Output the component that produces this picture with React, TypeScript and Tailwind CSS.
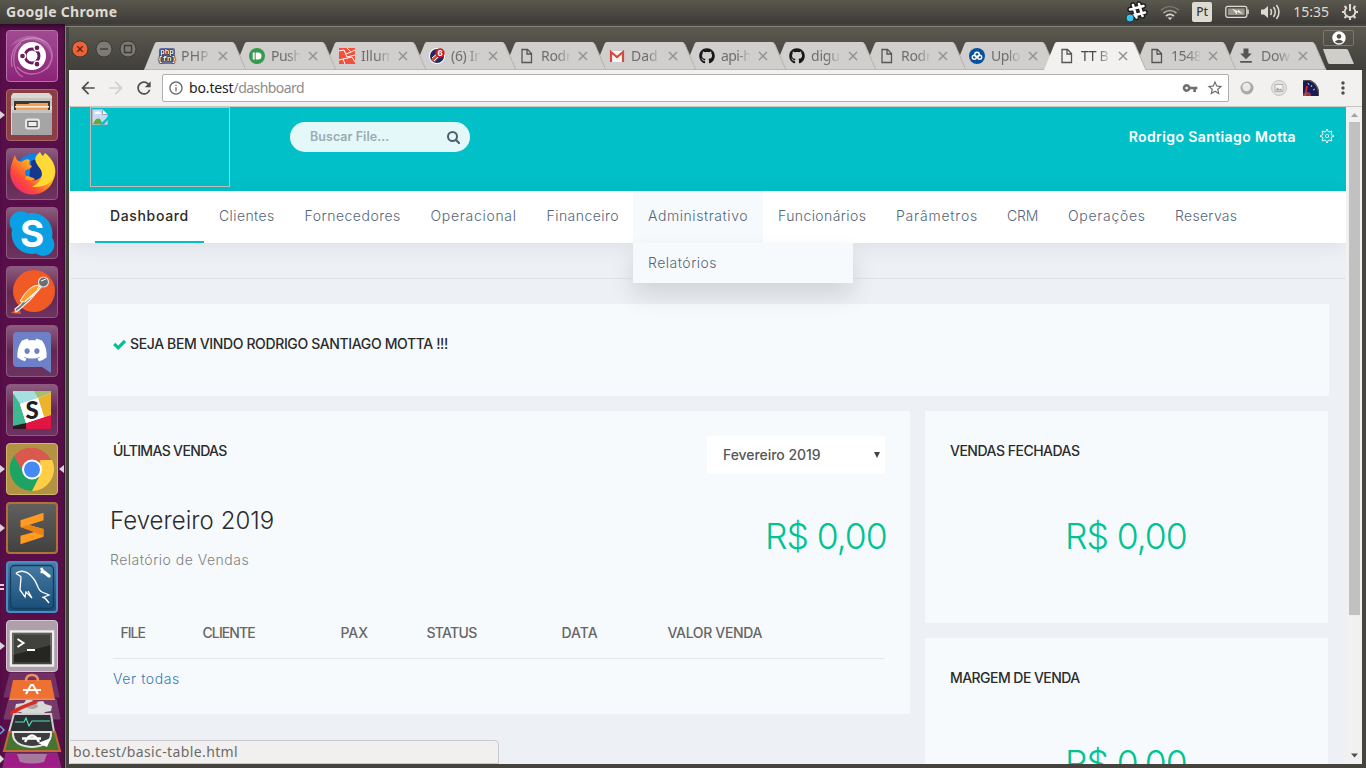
import React from "react";
import {
  MdArrowBack,
  MdArrowForward,
  MdRefresh,
  MdInfoOutline,
  MdVpnKey,
  MdStarBorder,
  MdMoreVert,
  MdFileDownload,
  MdAccountCircle,
} from "react-icons/md";
import { FaGithub, FaSkype, FaDiscord } from "react-icons/fa";
import { TfiSettings } from "react-icons/tfi";

/* ---------- system bar ---------- */

function SystemBar() {
  return (
    <header className="flex h-6 shrink-0 items-center justify-between bg-linear-to-b from-[#5a584e] to-[#3c3b37] pr-[7px] pl-[6px] font-['Noto_Sans',sans-serif] text-[#dfdbd2]">
      <span className="-mt-px text-[14px] font-bold tracking-[0.3px]">Google Chrome</span>
      <div className="flex items-center">
        <svg className="mr-[12px] h-6 w-6" viewBox="0 0 24 24">
          <g stroke="#1f1f1f" strokeWidth="5.500" strokeLinecap="round">
            <path d="M9 5l3.500 12.500M15 4l3.500 12M6 9.500l13.500-3.500M7.500 16l13.500-3.500" />
          </g>
          <g stroke="#fff" strokeWidth="2.600" strokeLinecap="round">
            <path d="M9 5l3.500 12.500M15 4l3.500 12M6 9.500l13.500-3.500M7.500 16l13.500-3.500" />
          </g>
          <circle cx="6" cy="18" r="4" fill="#39c3f2" stroke="#222" strokeWidth=".8" />
        </svg>
        <svg className="mr-[12px] h-[18px] w-5" viewBox="0 0 20 18" fill="none" strokeWidth="1.700">
          <path d="M1 7q9-7 18 0" stroke="#77756c" />
          <path d="M3.500 10q6.500-5 13 0" stroke="#aaa79e" />
          <path d="M6 13q4-3.200 8 0" stroke="#dfdbd2" />
          <path d="M7.500 14.500h5L10 17z" fill="#dfdbd2" />
        </svg>
        <span className="mr-[13px] flex h-5 w-5 items-center justify-center rounded-[2px] bg-[#dfdbd2] text-[12px] font-medium text-[#3c3b37]">
          Pt
        </span>
        <svg className="mr-[11px] h-[14px] w-6" viewBox="0 0 24 14">
          <rect x=".8" y="1.300" width="21" height="11" rx="2" fill="none" stroke="#dfdbd2" strokeWidth="1.300" />
          <rect x="3" y="3.500" width="16.600" height="6.600" fill="#99968d" />
          <path d="M7 3.500l6 3v-2l5 4.500-6-2v2.500z" fill="#f4f1e8" />
          <path d="M23 4.500v4.500" stroke="#dfdbd2" strokeWidth="1.500" />
        </svg>
        <svg className="mr-[13px] h-[18px] w-5" viewBox="0 0 20 18" fill="none" stroke="#dfdbd2" strokeWidth="1.500">
          <path d="M1 6.500h3l4-3.500v12L4 11.500H1z" fill="#dfdbd2" stroke="none" />
          <path d="M10.500 6q2 3 0 6M13.500 4q3.500 5 0 10M16.500 2q5 7 0 14" />
        </svg>
        <span className="-mt-px mr-[12px] text-[14px]">15:35</span>
        <svg className="h-[18px] w-[18px]" viewBox="0 0 18 18" fill="none" stroke="#dfdbd2">
          <path d="M6 4.500a5.300 5.300 0 1 0 6 0" strokeWidth="1.800" />
          <path d="M9 1v7" strokeWidth="2" />
          <path d="M3.500 3l2 2M14.500 3l-2 2M1 9h3M17 9h-3M3.500 15l2-2M14.500 15l-2-2M9 17v-3" strokeWidth="2" />
        </svg>
      </div>
    </header>
  );
}

/* ---------- launcher ---------- */

const tile = "flex h-[52px] w-[52px] items-center justify-center overflow-hidden rounded-[4px] border";
const plum = "border-[#8d5a80] bg-linear-to-b from-[#8c5c7f] via-[#64274f] to-[#6d3360]";

function UbuntuIcon() {
  return (
    <svg className="h-[50px] w-[50px]" viewBox="0 0 50 50">
      <g fill="none" stroke="#d39ccb" strokeWidth="1.300" opacity=".6">
        <path d="M5 36C0 10 26 0 40 12q10 12 0 26" />
        <path d="M44 20c6 18-20 32-34 16M16 46C4 40 4 20 14 12" />
      </g>
      <path d="M3 16C16-2 42 2 44 25 40 8 18 4 3 16z" fill="#fff" opacity=".18" />
      <circle cx="25" cy="25" r="14" fill="#fff" />
      <circle cx="25" cy="25" r="7" fill="none" stroke="#6b1d5e" strokeWidth="3" />
      <g fill="#6b1d5e" stroke="#fff" strokeWidth="1.300">
        <circle cx="15.500" cy="25" r="3" />
        <circle cx="30" cy="16.800" r="3" />
        <circle cx="30" cy="33.200" r="3" />
      </g>
    </svg>
  );
}

function FilesIcon() {
  return (
    <svg className="h-[50px] w-[50px]" viewBox="0 0 50 50">
      <path d="M6 3h36l3 3v39H4V6z" fill="#d8d8d6" />
      <path d="M4 8h41v8H4z" fill="#c4c4c2" />
      <path d="M7 11h36v9H7z" fill="#41362f" />
      <path d="M9 14h12l2-1h18v8H9z" fill="#f0a05a" />
      <path d="M8 16h34v1.500H8z" fill="#fff3df" />
      <path d="M5 20h40v25H5z" fill="#a5a5a5" />
      <path d="M5 20h40v3H5z" fill="#c4c4c4" />
      <rect x="19" y="29.500" width="13" height="9" rx="2" fill="none" stroke="#e7e7e7" strokeWidth="2" />
      <rect x="21" y="31.500" width="9" height="5" fill="#eee" stroke="#555" />
    </svg>
  );
}

function FirefoxIcon() {
  return (
    <svg className="h-[50px] w-[50px]" viewBox="0 0 50 50">
      <defs>
        <linearGradient id="ff" x1="1" y1="0" x2="0" y2="1">
          <stop offset="0" stopColor="#fff44f" />
          <stop offset=".4" stopColor="#ffb01e" />
          <stop offset=".68" stopColor="#ff4a3a" />
          <stop offset="1" stopColor="#e5178c" />
        </linearGradient>
      </defs>
      <circle cx="26" cy="22" r="17" fill="#0a84e8" />
      <path d="M24 12c8-4 15 2 14 14-1 8-10 10-16 5z" fill="#17378f" />
      <path d="M8 6c1 5 3 6 6 7 4-3 8-4 9-1-2 2 0 4 2 5-1 3-4 3-7 5-1 6 7 13 15 7 6-6 3-11 2-15-1-4 1-7 3-10 10 8 13 18 8 28-5 13-23 18-34 9C-1 30 3 17 8 6z" fill="url(#ff)" />
      <path d="M33 3c-9 7-3 12 1 18 3 7-2 13-9 17 17 1 26-9 21-20C44 9 36 10 33 3z" fill="#ffd935" />
      <path d="M18 31c4-1 6 2 10-1-2-1-5-3-9-3z" fill="#ffa21a" />
    </svg>
  );
}

function SkypeIcon() {
  return (
    <div className="relative flex h-[50px] w-[50px] items-center justify-center">
      <FaSkype className="h-[51px] w-[51px] text-[#0ba0e4]" />
      <svg className="absolute h-[50px] w-[50px]" viewBox="0 0 50 50">
        <circle cx="25" cy="25" r="16" fill="#0c9fe2" />
      </svg>
      <span className="absolute font-['Inter',sans-serif] text-[37px] leading-none font-bold text-white">S</span>
    </div>
  );
}

function PostmanIcon() {
  return (
    <svg className="h-[50px] w-[50px]" viewBox="0 0 50 50">
      <circle cx="27" cy="24" r="21" fill="#f15a24" />
      <path d="M4 46l8-6 2 7z" fill="#f15a24" />
      <path d="M35 19L23 33 13 42l-4 3-1-3 5-4 14-18z" fill="#777" stroke="#eee" strokeWidth="1.200" />
      <path d="M32 18q-10 0-19 16l5 1 14-12z" fill="#ff9a2b" stroke="#fff" />
      <path d="M18 34l14-12" stroke="#fff" />
      <circle cx="36.500" cy="15" r="5" fill="#6d6e71" stroke="#ddd" strokeWidth="1.200" />
      <path d="M34 14l5-2M33 19l-3 3" stroke="#fff" />
    </svg>
  );
}

function DiscordIcon() {
  return (
    <div className="relative flex h-[50px] w-[50px] items-center justify-center">
      <svg className="absolute h-[50px] w-[50px]" viewBox="0 0 50 50">
        <path d="M10 6h30q4 0 4 4v37l-9-6H10q-4 0-4-4V10q0-4 4-4z" fill="#6d80c8" />
      </svg>
      <FaDiscord className="relative h-[30px] w-[32px] -translate-y-px text-white" />
    </div>
  );
}

function SlackIcon() {
  return (
    <div className="relative flex h-[50px] w-[50px] items-center justify-center">
      <svg className="absolute h-[50px] w-[50px]" viewBox="0 0 50 50">
        <path d="M6 6h38v38H6z" fill="#fff" />
        <path d="M6 6h22l3 7-21 7z" fill="#a6dfe0" />
        <path d="M27 6h17v2l-13 5z" fill="#a5bf70" />
        <path d="M31 13l13-5v22l-7 2z" fill="#ecb32d" />
        <path d="M6 8l7 11 6 19-13 5z" fill="#3eb890" />
        <path d="M19 38l25-8v14H19z" fill="#e01543" />
        <path d="M6 41l13-3v6H6z" fill="#2d1823" />
        <path d="M13 19l18-6 6 19-18 6z" fill="#fff" />
      </svg>
      <span className="relative font-['Lato',sans-serif] text-[24px] leading-none font-black text-[#202020]">S</span>
    </div>
  );
}

function ChromeIcon() {
  return (
    <svg className="h-[50px] w-[50px]" viewBox="0 0 50 50">
      <path d="M7 12A22 22 0 0 1 44 16L45 18H25L16 28z" fill="#d9594f" />
      <path d="M45 16A22 22 0 0 1 24 47L34 28 33 16z" fill="#ffcd46" />
      <path d="M7 12A22 22 0 0 0 25 47L32 33 17 29z" fill="#1da362" />
      <circle cx="25" cy="25.500" r="10" fill="#fff" />
      <circle cx="25" cy="25.500" r="8" fill="#4688f4" />
    </svg>
  );
}

function SublimeIcon() {
  return (
    <svg className="h-[48px] w-[48px]" viewBox="0 0 50 50">
      <path d="M13 17l24-8v8l-15 5 15 4v8l-24 8v-9l15-4-15-5z" fill="#ff9a22" />
      <path d="M13 24l24 9v-7l-15-4z" fill="#e88414" />
    </svg>
  );
}

function WorkbenchIcon() {
  return (
    <svg className="h-[48px] w-[48px]" viewBox="0 0 48 48" fill="none" stroke="#fff" strokeWidth="1.300">
      <rect x="2.500" y="2.500" width="43" height="43" rx="4" stroke="#123d5d" />
      <path d="M8 10c7-4 13 0 17 5 5 5 4 12 9 14l7 3-5 2 5 6M8 10c1 2 4 2 5 4l-1 13 5 7 1-5 6 6-4-7M34 34l4 2 3 4" />
      <path d="M36 9l5 4" strokeWidth="3.500" strokeLinecap="round" />
      <path d="M33 5l2 3M32.500 9h4" strokeWidth="2.500" />
    </svg>
  );
}

function TerminalIcon() {
  return (
    <svg className="h-[50px] w-[50px]" viewBox="0 0 50 50">
      <rect x="4" y="10.500" width="42" height="34" fill="#34352f" stroke="#eee" strokeWidth="2.500" />
      <rect x="6.500" y="13" width="37" height="29" fill="#252622" stroke="#555" />
      <path d="M6 12h38v12L6 34z" fill="#fff" opacity=".13" />
      <path d="M10.500 18l6 4-6 4M20 29h8" fill="none" stroke="#fff" strokeWidth="2" />
    </svg>
  );
}

function FoldedStack() {
  return (
    <svg className="h-[96px] w-16" viewBox="0 0 64 96">
      <path d="M10 1h44l5 24H4z" fill="#fff" opacity=".15" stroke="#fff" />
      <path d="M13 8h38l4 20H9z" fill="#ef7132" />
      <path d="M26 9q0-6 6-6t6 6" fill="none" stroke="#e8905f" strokeWidth="2.500" />
      <path d="M23 18h18M26 22l5-9h2l5 9" stroke="#fff" strokeWidth="2" fill="none" />
      <path d="M9 27h47l4 20H4z" fill="#fff" opacity=".18" stroke="#fff" />
      <path d="M16 32l8-1 2-3h6l3 2 8-1 2 3 7 2-1 5-6 1-3 4H24l-3-4-7 1z" fill="#d8d8d6" />
      <ellipse cx="32" cy="34" rx="6" ry="3" fill="#a9a3a7" />
      <path d="M10 40c8-6 14-7 25-12l3 3c-9 3-17 6-25 12q-4 0-3-3z" fill="#d92c25" />
      <path d="M14 42h37l3 18H9z" fill="#2b3132" stroke="#ccc" strokeWidth="2" />
      <path d="M15 50h9l2-4 3 8 3-5h18" fill="none" stroke="#57dcc0" strokeWidth="1.200" />
      <path d="M9 60h46l5 19H4z" fill="#467532" stroke="#c36a36" strokeWidth="2" />
      <path d="M13 60h38q1 14-19 15-20-1-19-15z" fill="#3d3e3d" stroke="#e4e4e4" strokeWidth="2" />
      <path d="M25 70q7-13 14 0M22 66.500h19" fill="none" stroke="#fff" strokeWidth="2.500" />
      <path d="M38 71l13-5-4 9z" fill="#fff" />
      <path d="M6 81h51l4 15H3z" fill="#9d1c85" stroke="#7e3b70" />
      <path d="M17 82h30l-3 8q-12 3-24 0z" fill="#a8799f" />
      <path d="M0 54l4 4-4 4" fill="none" stroke="#68a7df" strokeWidth="1.500" />
      <path d="M0 83l4 4-4 4z" fill="#ddd" />
    </svg>
  );
}

const apps = [
  { name: "dash", skin: "border-[#b772ad] bg-linear-to-b from-[#a04a92] to-[#8d2377]", icon: <UbuntuIcon />, run: 0, focus: false },
  { name: "files", skin: "border-[#a96a6a] bg-[#8b3f45]", icon: <FilesIcon />, run: 1, focus: false },
  { name: "firefox", skin: plum, icon: <FirefoxIcon />, run: 0, focus: false },
  { name: "skype", skin: plum, icon: <SkypeIcon />, run: 0, focus: false },
  { name: "postman", skin: plum, icon: <PostmanIcon />, run: 0, focus: false },
  { name: "discord", skin: plum, icon: <DiscordIcon />, run: 0, focus: false },
  { name: "slack", skin: plum, icon: <SlackIcon />, run: 0, focus: false },
  { name: "chrome", skin: "border-[#d0b76b] bg-[#b29343]", icon: <ChromeIcon />, run: 1, focus: true },
  { name: "sublime", skin: "border-2 border-[#b3713a] bg-linear-to-b from-[#62605e] to-[#41413f]", icon: <SublimeIcon />, run: 1, focus: false },
  { name: "workbench", skin: "border-2 border-[#4c8cc4] bg-linear-to-b from-[#467ca6] to-[#174d76]", icon: <WorkbenchIcon />, run: 2, focus: false },
  { name: "terminal", skin: "border-[#d5c6d1] bg-[#ada0aa]", icon: <TerminalIcon />, run: 1, focus: false },
];

function Launcher() {
  return (
    <aside className="flex w-[65px] shrink-0 flex-col overflow-hidden border-r border-[#35102c] bg-[#570e49] pt-[6px] shadow-[inset_0_5px_5px_-3px_#2a0822]">
      {apps.map((a) => (
        <div key={a.name} className="mb-[7px] flex h-[52px] shrink-0 items-center last-of-type:mb-0">
          <svg className="h-[10px] w-[6px] shrink-0" viewBox="0 0 6 10" fill="#dcd3da">
            {a.run === 1 && <path d="M0 1l5 4-5 4z" />}
            {a.run === 2 && <path d="M0 2h4v2H0zM0 6h4v2H0z" />}
          </svg>
          <div className={`${tile} ${a.skin}`}>{a.icon}</div>
          {a.focus && (
            <svg className="h-[10px] w-[6px] shrink-0" viewBox="0 0 6 10" fill="#dcd3da">
              <path d="M6 1L1 5l5 4z" />
            </svg>
          )}
        </div>
      ))}
      <FoldedStack />
    </aside>
  );
}

/* ---------- browser chrome ---------- */

const pageIcon = (
  <svg className="h-4 w-4" viewBox="0 0 16 16" fill="none" stroke="#555" strokeWidth="1.300">
    <path d="M3 1.500h5.500l4 4v9H3zM8 1.500v4.500h4.500" />
  </svg>
);

const icons: Record<string, React.ReactNode> = {
  page: pageIcon,
  php: (
    <span className="flex h-4 w-4 flex-col items-center justify-center rounded-[2px] bg-[#6d70a5] font-['Liberation_Mono',monospace] text-[7.500px] leading-[7px] font-bold text-white [text-shadow:0_0_1px_#000,0_0_1px_#000,0_0_2px_#000]">
      <span>php</span>
      <span>{"{fn}"}</span>
    </span>
  ),
  push: (
    <svg className="h-4 w-4" viewBox="0 0 16 16">
      <circle cx="8" cy="8" r="8" fill="#359a4b" />
      <path d="M3.700 4.500h2v7h-2zM6.700 4.500H9a3.500 3.500 0 0 1 0 7H6.700z" fill="#fff" />
    </svg>
  ),
  laravel: (
    <svg className="h-4 w-4" viewBox="0 0 16 16">
      <path d="M0 0h16v16H0z" fill="#f4503b" />
      <path d="M0 3l5-1 3 7 8-2M4 11l9-2 3 5M8 0l4 4 4-2M12 4l-5 2M0 12l4-1 2 5" fill="none" stroke="#fff" />
    </svg>
  ),
  inbox: (
    <svg className="h-4 w-4" viewBox="0 0 16 16">
      <circle cx="8" cy="8" r="8" fill="#fff" />
      <circle cx="8" cy="8" r="7" fill="#20285f" />
      <path d="M2 12l8-9 4 2-8 9z" fill="#e34b35" />
      <path d="M3 10l7-6M5 13l7-7" stroke="#fff" />
      <circle cx="11" cy="5" r="4.700" fill="#c51f24" />
      <text x="11" y="8" textAnchor="middle" fontFamily="Inter" fontWeight="700" fontSize="8" fill="#fff">6</text>
    </svg>
  ),
  gmail: (
    <svg className="h-4 w-4" viewBox="0 0 16 16">
      <path d="M1 3h14v11H1z" fill="#f5f5f5" />
      <path d="M2 14V4l6 5 6-5v10" fill="none" stroke="#d54b3d" strokeWidth="2.200" />
    </svg>
  ),
  github: <FaGithub className="h-4 w-4 text-[#191717]" />,
  cloud: (
    <svg className="h-4 w-4" viewBox="0 0 16 16">
      <circle cx="8" cy="8" r="8" fill="#07529c" />
      <g fill="none" stroke="#fff" strokeWidth="1.400">
        <circle cx="8" cy="6.500" r="2.300" />
        <circle cx="5.300" cy="9.300" r="2" />
        <circle cx="10.700" cy="9.300" r="2" />
      </g>
    </svg>
  ),
  download: <MdFileDownload className="h-5 w-5 -translate-x-[3px] -translate-y-[2px] text-[#555]" />,
};

const tabs = [
  { icon: "php", label: "PHP", spacing: "tracking-[0.2px]" },
  { icon: "push", label: "Push", spacing: "tracking-[-0.5px]" },
  { icon: "laravel", label: "Illum", spacing: "tracking-[0px]" },
  { icon: "inbox", label: "(6) In", spacing: "tracking-[-0.3px]" },
  { icon: "page", label: "Rodr", spacing: "tracking-[-0.3px]" },
  { icon: "gmail", label: "Dad", spacing: "tracking-[0px]" },
  { icon: "github", label: "api-h", spacing: "tracking-[-0.6px]" },
  { icon: "github", label: "digu", spacing: "tracking-[-0.2px]" },
  { icon: "page", label: "Rodr", spacing: "tracking-[-0.3px]" },
  { icon: "cloud", label: "Uplo", spacing: "tracking-[-0.5px]" },
  { icon: "page", label: "TT B", spacing: "tracking-[-0.3px]", active: true },
  { icon: "page", label: "1548", spacing: "tracking-[-0.4px]" },
  { icon: "download", label: "Dow", spacing: "tracking-[-0.2px]" },
];

const tabLayers = ["z-13", "z-12", "z-11", "z-10", "z-9", "z-8", "z-7", "z-6", "z-5", "z-4", "z-20", "z-2", "z-1"];

function TabStrip() {
  return (
    <div className="flex h-[43px] shrink-0 items-start bg-linear-to-b from-[#5b594f] to-[#403f3a] pl-[2px]">
      <svg className="mt-[13px] mr-[7px] h-[18px] w-[66px]" viewBox="0 0 66 18">
        <circle cx="9" cy="9" r="8" fill="#ef6236" stroke="#3b3933" />
        <path d="M6.300 6.300l5.400 5.400M11.700 6.300l-5.400 5.400" stroke="#5b2613" strokeWidth="1.400" />
        <circle cx="33" cy="9" r="8" fill="#7d7a73" stroke="#3b3933" />
        <path d="M29 9h8" stroke="#3b3933" strokeWidth="1.300" />
        <circle cx="57" cy="9" r="8" fill="#7d7a73" stroke="#3b3933" />
        <path d="M53.500 5.500h7v7h-7z" fill="none" stroke="#3b3933" strokeWidth="1.300" />
      </svg>
      <div className="mt-[15px] flex h-7">
        {tabs.map((t, i) => (
          <div key={i} className={`relative flex h-7 w-[90px] shrink-0 items-center pl-[15px] ${tabLayers[i]}`}>
            <svg className="absolute top-0 left-0 h-7 w-[103px]" viewBox="0 0 103 28">
              <path d="M0 28L10.500 2q.8-2 2.500-2h75q2 0 2.700 2L102 28z" fill={t.active ? "#f2f1f0" : "#d0cfcd"} />
              <path d="M90.700 2L102 28" stroke="#b3b1ad" fill="none" />
              {!t.active && <path d="M0 27.500h102" stroke="#b9b7b4" />}
            </svg>
            <span className="relative h-4 w-4">{icons[t.icon]}</span>
            <span
              className={`relative ml-[6px] w-[29px] font-['Noto_Sans',sans-serif] text-[14px] leading-5 whitespace-nowrap [mask-image:linear-gradient(90deg,#000_55%,transparent_105%)] ${t.spacing} ${t.active ? "text-[#4a4a4a]" : "text-[#6f6e6c]"}`}
            >
              {t.label}
            </span>
            <svg className="relative ml-[8px] h-[10px] w-[10px] shrink-0" viewBox="0 0 10 10" stroke="#94928f" strokeWidth="1.500">
              <path d="M1 1l8 8M9 1L1 9" />
            </svg>
          </div>
        ))}
      </div>
      <div className="flex flex-col">
        <div className="mt-[3px] ml-[9px] flex h-4 w-[31px] items-center justify-center rounded-[2px] border border-[#7a776f]">
          <MdAccountCircle className="h-4 w-4 text-white" />
        </div>
        <svg className="mt-[3px] ml-[8px] h-[15px] w-8" viewBox="0 0 32 15">
          <path d="M1 0h23q1.500 0 2 1l6 14H8q-1.500 0-2-1z" fill="#cfcecb" />
        </svg>
      </div>
    </div>
  );
}

function Toolbar() {
  return (
    <div className="flex h-[37px] shrink-0 items-center border-b border-[#c9c7c4] bg-[#f2f1f0] pl-[9px]">
      <MdArrowBack className="mr-[8px] h-5 w-5 text-[#4d4d4d]" />
      <MdArrowForward className="mr-[8px] h-5 w-5 text-[#cfcfcf]" />
      <MdRefresh className="mr-[8px] h-5 w-5 text-[#4d4d4d]" />
      <div className="flex h-7 w-[1067px] items-center rounded-[2px] border border-[#b1afab] bg-white pr-[4px] pl-[5px] font-['Noto_Sans',sans-serif] text-[14px]">
        <MdInfoOutline className="mr-[5px] h-4 w-4 text-[#6a6a6a]" />
        <span className="-mt-0.5 tracking-[-0.15px] text-[#222]">bo.test</span>
        <span className="-mt-0.5 tracking-[-0.55px] text-[#8c8c8c]">/dashboard</span>
        <MdVpnKey className="mr-[8px] ml-auto h-4 w-4 text-[#6f6f6f]" />
        <MdStarBorder className="h-[18px] w-[18px] text-[#6f6f6f]" />
      </div>
      <svg className="ml-[11px] h-[14px] w-[14px]" viewBox="0 0 14 14">
        <circle cx="7" cy="7" r="6.500" fill="#a9a9a9" />
        <circle cx="6.500" cy="6" r="4.200" fill="#e9e9e9" />
      </svg>
      <svg className="ml-[17px] h-4 w-4" viewBox="0 0 16 16">
        <circle cx="8" cy="8" r="7.500" fill="#e2e2e2" stroke="#c2c2c2" />
        <path d="M4 4.500h8v7H4z" fill="#f3f3f3" stroke="#b0b0b0" />
        <path d="M4.500 10.500l2-3 2 2 1.500-1 1.500 2z" fill="#a0a0a0" />
      </svg>
      <svg className="ml-[16px] h-4 w-4" viewBox="0 0 16 16">
        <path d="M0 1q6-3 12 3 4 5 4 12H0z" fill="#191b54" />
        <path d="M0 1q6-3 12 3 4 5 4 12" fill="none" stroke="#555" strokeWidth="1.500" />
        <path d="M5 3l1 2M9 5L8 7M12 9l-2 1" stroke="#b9c6f5" />
        <path d="M2 16L4 6" stroke="#f12c2c" strokeWidth="1.500" />
        <path d="M0 14q6-4 8 0v2H0z" fill="#d34f59" opacity=".6" />
      </svg>
      <MdMoreVert className="ml-[14px] h-5 w-5 text-[#4d4d4d]" />
    </div>
  );
}

/* ---------- page ---------- */

const menu = [
  { label: "Dashboard", box: "w-[109px] border-b-2 border-[#01c0c8] font-medium text-[#2b2b2b] tracking-[0.65px]" },
  { label: "Clientes", box: "w-[85.500px] tracking-[0.4px]" },
  { label: "Fornecedores", box: "w-[126px] tracking-[0.5px]" },
  { label: "Operacional", box: "w-[116px] tracking-[0.7px]" },
  { label: "Financeiro", box: "w-[101.500px] tracking-[0.45px]" },
  { label: "Administrativo", box: "relative w-[130px] bg-[#f7fafc] tracking-[0.57px]" },
  { label: "Funcionários", box: "w-[118px] tracking-[0.4px]" },
  { label: "Parâmetros", box: "w-[111px] tracking-[0.8px]" },
  { label: "CRM", box: "w-[61px] tracking-[-0.2px]" },
  { label: "Operações", box: "w-[107px] tracking-[0.7px]" },
  { label: "Reservas", box: "w-[92px] tracking-[0.3px]" },
];

function BrandBar() {
  return (
    <div className="flex h-[84px] shrink-0 items-start bg-[#01c0c8] pl-[20px]">
      <div className="h-20 w-[140px] border border-[#c0c0c0] p-px">
        <svg className="h-4 w-4" viewBox="0 0 16 16">
          <path d="M.5.500h10l5 5v10H.5z" fill="#c7dbf8" stroke="#b5b5b5" />
          <path d="M10.500.500v5h5" fill="#fff" stroke="#a5a5a5" />
          <path d="M2.500 5q0-2 2-2 1-1.500 2.500 0 2 0 2 2z" fill="#fff" />
          <path d="M1 15q3-7 7-5l3 5z" fill="#5cad3b" />
          <path d="M8 15.500l8-8v3l-4 5z" fill="#01c0c8" />
        </svg>
      </div>
      <div className="mt-[15px] ml-[60px] flex h-[30px] w-[180px] items-center justify-between rounded-full bg-[#e5f8f9] pr-[10px] pl-5">
        <span className="text-[12.500px] font-semibold tracking-[0.04px] text-[#9aabb1]">Buscar File...</span>
        <svg className="h-[13px] w-[13px]" viewBox="0 0 13 13" fill="none" stroke="#4d6070">
          <circle cx="5.500" cy="5.500" r="4.500" strokeWidth="2" />
          <path d="M8.800 8.800l3.200 3.200" strokeWidth="2.200" strokeLinecap="round" />
        </svg>
      </div>
      <span className="mt-[19px] ml-auto text-[14px] leading-[22px] font-semibold tracking-[0.4px] text-white">Rodrigo Santiago Motta</span>
      <TfiSettings className="mt-[22px] mr-[12px] ml-[24px] h-[14px] w-[14px] text-white" />
    </div>
  );
}

function Menu() {
  return (
    <nav className="relative z-10 flex h-[52px] shrink-0 bg-white pl-[25px] text-[14px] font-light text-[#54667a] shadow-[0_4px_20px_rgba(0,0,0,0.07)]">
      {menu.map((m) => (
        <div key={m.label} className={`flex h-[52px] shrink-0 items-start pt-[15px] pl-[15px] leading-5 whitespace-nowrap ${m.box}`}>
          {m.label}
          {m.label === "Administrativo" && (
            <div className="absolute top-[52px] left-0 h-10 w-[220px] bg-[#f7fafc] px-[15px] pt-[10px] tracking-[0.5px] shadow-[0_12px_24px_rgba(0,0,0,0.12)]">
              Relatórios
            </div>
          )}
        </div>
      ))}
    </nav>
  );
}

const title = "text-[14px] leading-5 font-medium text-[#2b2b2b]";
const amount = "text-[35.500px] leading-[40px] font-light tracking-[-1.05px] whitespace-nowrap text-[#00c292]";

function SalesCard() {
  return (
    <section className="h-[303px] w-[822px] bg-[#f7fafc] px-[25px] pt-[25px]">
      <div className="flex h-[38px] justify-between">
        <h3 className={`${title} mt-[5px] tracking-[-0.65px]`}>ÚLTIMAS VENDAS</h3>
        <div className="flex h-[38px] w-[178px] items-center justify-between bg-white pr-[5px] pl-4 text-[14px] font-medium text-[#565656]">
          <span className="-mt-0.5 tracking-[-0.05px]">Fevereiro 2019</span>
          <svg className="h-[6px] w-[6px]" viewBox="0 0 6 6">
            <path d="M0 0h6L3 6z" fill="#444" />
          </svg>
        </div>
      </div>
      <div className="mr-[-2px] ml-[-3px] flex justify-between">
        <div>
          <p className="mt-[29px] text-[24px] leading-9 font-light tracking-[0.03px] text-[#2b2b2b]">Fevereiro 2019</p>
          <p className="mt-[11px] text-[14px] leading-5 font-light tracking-[0.5px] text-[#808080]">Relatório de Vendas</p>
        </div>
        <p className={`${amount} mt-[43px] w-[122px]`}>R$ 0,00</p>
      </div>
      <table className="mt-[38px] w-[772px] table-fixed border-b border-[#e4e7ea] text-left text-[14px] text-[#666]">
        <thead>
          <tr className="h-[50px] leading-5">
            <th className="w-[82px] pl-[7.500px] font-medium tracking-[-1px]">FILE</th>
            <th className="w-[138px] pl-[7.500px] font-medium tracking-[-0.9px]">CLIENTE</th>
            <th className="w-[86px] pl-[7.500px] font-medium tracking-[-0.1px]">PAX</th>
            <th className="w-[135px] pl-[7.500px] font-medium tracking-[-0.7px]">STATUS</th>
            <th className="w-[106px] pl-[7.500px] font-medium">DATA</th>
            <th className="pl-[7.500px] font-medium tracking-[-0.35px]">VALOR VENDA</th>
          </tr>
        </thead>
      </table>
      <a className="mt-[10px] block text-[14px] leading-5 font-light tracking-[0.6px] text-[#337ab7]">Ver todas</a>
    </section>
  );
}

function TotalCard({ label, tracking }: { label: string; tracking: string }) {
  return (
    <section className="h-[212px] w-[403px] shrink-0 bg-[#f7fafc] pt-[30px] pl-[25px]">
      <h3 className={`${title} ${tracking}`}>{label}</h3>
      <p className={`${amount} mt-[56px] ml-[115px]`}>R$ 0,00</p>
    </section>
  );
}

function Page() {
  return (
    <div className="relative flex min-w-0 flex-1 flex-col overflow-hidden bg-[#edf1f5] font-['Inter',sans-serif]">
      <BrandBar />
      <Menu />
      <div className="h-9 shrink-0 border-b border-[#e1e5e8]" />
      <main className="flex min-h-0 flex-1 flex-col gap-[15px] pt-[25px] pl-[18px]">
        <section className="flex h-[92px] w-[1241px] shrink-0 items-start bg-[#f7fafc] pt-[30px] pl-[25px]">
          <svg className="mt-[5px] mr-[4px] h-[11px] w-[13px]" viewBox="0 0 13 11" fill="none" stroke="#00c292" strokeWidth="3.200">
            <path d="M1.200 4.800l4 4L12 2" />
          </svg>
          <h3 className={`${title} tracking-[-0.37px]`}>SEJA BEM VINDO RODRIGO SANTIAGO MOTTA !!!</h3>
        </section>
        <div className="flex gap-[15px]">
          <SalesCard />
          <div className="flex flex-col gap-[15px]">
            <TotalCard label="VENDAS FECHADAS" tracking="tracking-[-0.5px]" />
            <TotalCard label="MARGEM DE VENDA" tracking="tracking-[-0.55px]" />
          </div>
        </div>
      </main>
      <div className="absolute bottom-0 -left-px z-20 h-6 w-[430px] rounded-tr-[4px] border border-[#c9c8cf] bg-[#f2f0ee] pl-[3px] font-['Noto_Sans',sans-serif] text-[14px] leading-[21px] tracking-[0.38px] text-[#6b6b6b]">
        bo.test/basic-table.html
      </div>
    </div>
  );
}

function Scrollbar() {
  return (
    <div className="flex w-4 shrink-0 flex-col items-center bg-[#f1f1f1]">
      <svg className="h-[15px] w-[15px] shrink-0" viewBox="0 0 15 15">
        <path d="M4 10l3.500-4 3.500 4z" fill="#a3a3a3" />
      </svg>
      <div className="h-[493px] w-[11px] bg-[#c1c1c1]" />
      <svg className="mt-auto h-[17px] w-[15px] shrink-0" viewBox="0 0 15 17">
        <path d="M4 6.500l3.500 4 3.500-4z" fill="#505050" />
      </svg>
    </div>
  );
}

export default function App() {
  return (
    <div className="flex h-[768px] w-[1366px] flex-col overflow-hidden bg-[#45433d]">
      <SystemBar />
      <div className="flex min-h-0 flex-1">
        <Launcher />
        <div className="mt-[2px] flex min-w-0 flex-1 flex-col border-t border-l border-[#85827a] bg-[#45433d] pl-[3px]">
          <TabStrip />
          <div className="mr-1 mb-1 flex min-h-0 flex-1 flex-col bg-[#f2f1f0]">
            <Toolbar />
            <div className="flex min-h-0 flex-1 pl-px">
              <Page />
              <Scrollbar />
            </div>
          </div>
        </div>
      </div>
    </div>
  );
}
